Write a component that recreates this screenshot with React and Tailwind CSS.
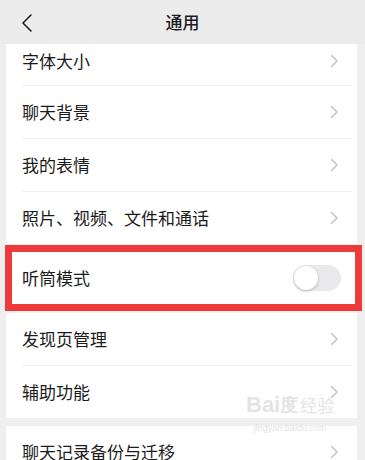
import React from "react";

const font = { fontFamily: '"Noto Sans CJK SC", "Noto Sans", sans-serif' };

function Chevron() {
  return (
    <svg width="9" height="14" viewBox="0 0 9 14" fill="none" className="mr-[18px]">
      <path d="M1.5 1.5 L7 7 L1.5 12.5" stroke="#bdbdbd" strokeWidth="1.3" strokeLinecap="round" strokeLinejoin="round" />
    </svg>
  );
}

function Row({ label, divider = true, first = false }) {
  return (
    <div className="flex flex-col bg-white">
      <div className={first ? "flex h-[41px] items-center justify-between pb-[8px] pl-[16px]" : "flex h-[52px] items-center justify-between pl-[16px]"}>
        <span className="text-[17px] leading-[24px] text-[#1b1b1b]">{label}</span>
        <Chevron />
      </div>
      {divider && <div className="ml-[16px] mr-[5px] h-px bg-[#efefef]" />}
    </div>
  );
}

function Toggle() {
  return (
    <div className="mr-[16px] flex h-[26px] w-[48px] items-center rounded-full bg-[#e9e9eb] p-[1px]">
      <div className="h-[24px] w-[24px] rounded-full bg-white shadow-[0_1px_3px_rgba(0,0,0,0.25)]" />
    </div>
  );
}

export default function App() {
  return (
    <div className="relative h-[460px] w-[365px] overflow-hidden bg-[#efefef]" style={font}>
      <div className="relative flex h-[44px] items-center justify-center bg-[#ececec]">
        <svg width="14" height="20" viewBox="0 0 14 20" fill="none" className="absolute left-[20px] top-[13px]">
          <path d="M11 2 L3 10 L11 18" stroke="#1e1e1e" strokeWidth="1.6" strokeLinecap="round" strokeLinejoin="round" />
        </svg>
        <span className="text-[17px] font-medium text-[#1b1b1b]">通用</span>
      </div>

      <div className="ml-[6px] mr-[8px] flex flex-col">
        <Row label="字体大小" first />
        <Row label="聊天背景" />
        <Row label="我的表情" />
        <Row label="照片、视频、文件和通话" divider={false} />

        <div className="h-[8px]" />

        <div className="relative flex h-[52px] items-center justify-between bg-white pl-[16px]">
          <span className="text-[17px] leading-[24px] text-[#1b1b1b]">听筒模式</span>
          <Toggle />
          <div className="absolute -left-[1px] -right-[5px] -top-[7px] -bottom-[7px] border-[7px] border-[#ee3a3a]" />
        </div>

        <div className="h-[9px]" />

        <Row label="发现页管理" />
        <Row label="辅助功能" divider={false} />

        <div className="h-[8px]" />

        <Row label="聊天记录备份与迁移" divider={false} />
      </div>

      <div className="pointer-events-none absolute left-[246px] top-[393px] flex flex-col items-center text-[#e4e4e4]">
        <div className="flex items-end text-[22px] font-bold leading-[24px]" style={{ fontFamily: '"Liberation Sans", sans-serif' }}>
          <span>Bai</span>
          <span className="text-[18px]">度</span>
          <span className="ml-[2px] text-[17px] font-normal" style={font}>经验</span>
        </div>
        <span className="mt-[6px] text-[9px] leading-[10px]" style={{ fontFamily: '"Liberation Sans", sans-serif' }}>jingyan.baidu.com</span>
      </div>
    </div>
  );
}
